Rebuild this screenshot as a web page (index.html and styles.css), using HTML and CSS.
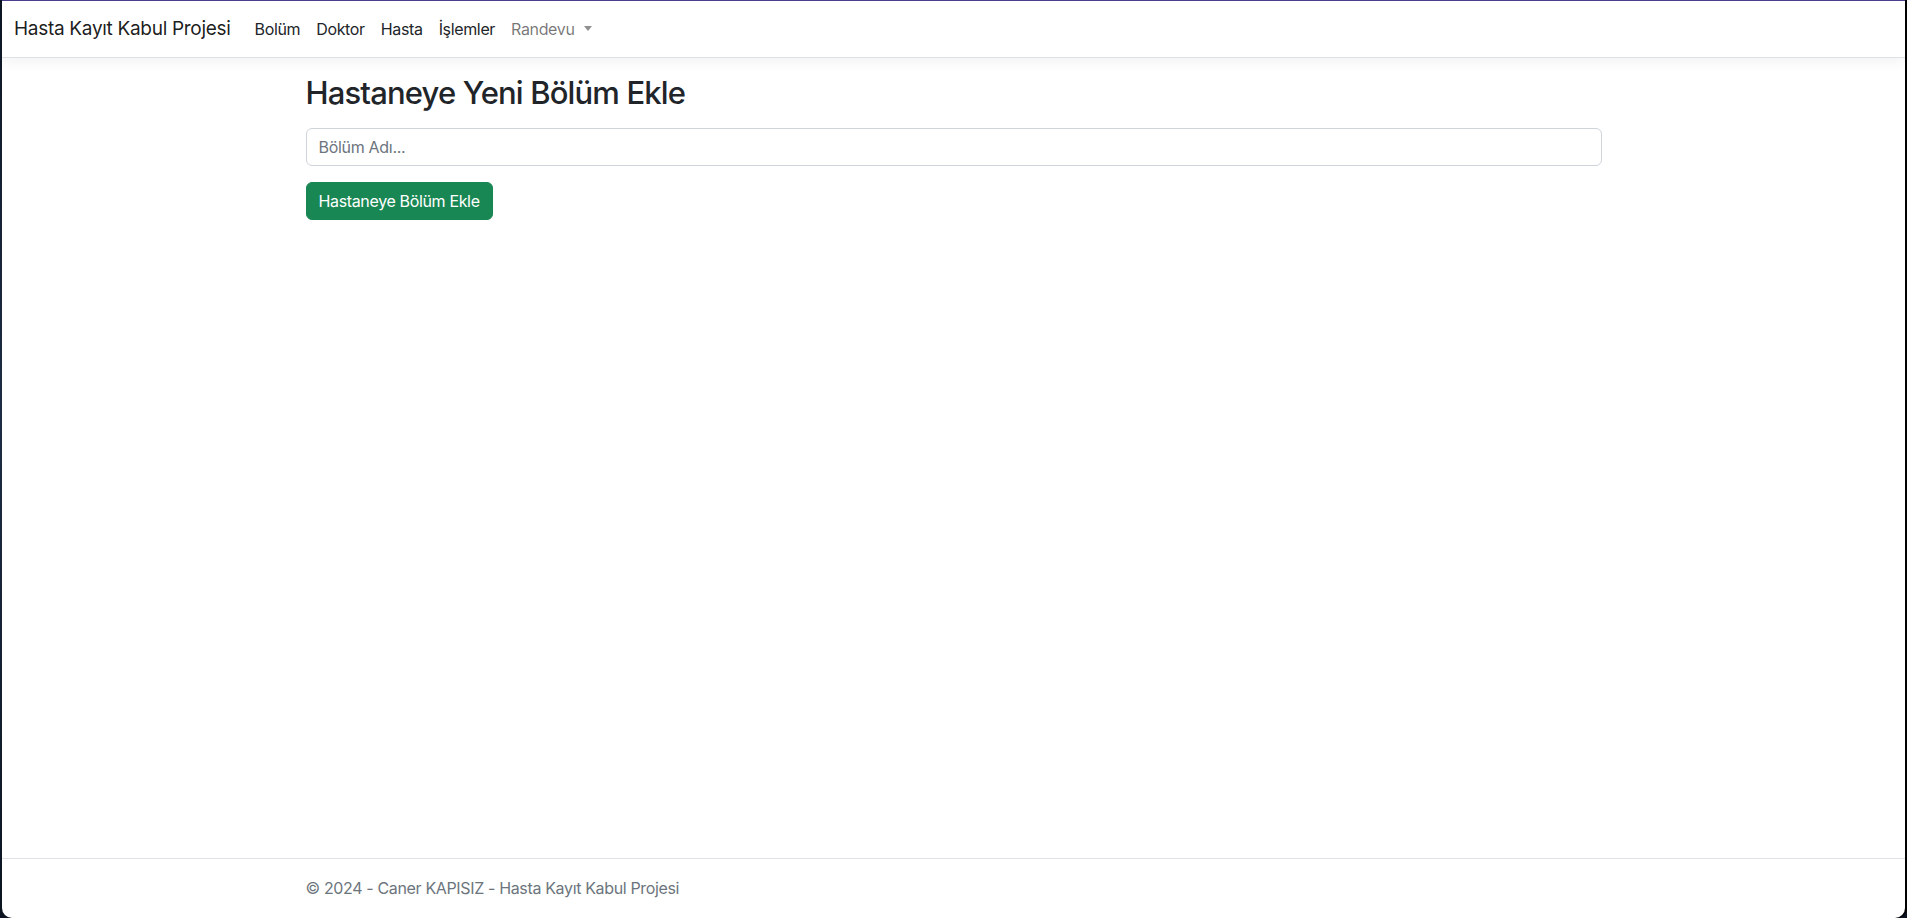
FILE: index.html
```html
<!DOCTYPE html>
<html lang="tr">
<head>
<meta charset="utf-8">
<title>Hasta Kayıt Kabul Projesi</title>
<link rel="stylesheet" href="styles.css">
</head>
<body>
<div class="window">
  <header class="navbar">
    <div class="navbar-inner">
      <a class="brand" href="#">Hasta Kayıt Kabul Projesi</a>
      <ul class="nav">
        <li><a class="nav-link dark" href="#">Bolüm</a></li>
        <li><a class="nav-link dark" href="#">Doktor</a></li>
        <li><a class="nav-link dark" href="#">Hasta</a></li>
        <li><a class="nav-link dark" href="#">İşlemler</a></li>
        <li><a class="nav-link muted dropdown-toggle" href="#">Randevu</a></li>
      </ul>
    </div>
  </header>
  <main class="container">
    <h2 class="title">Hastaneye Yeni Bölüm Ekle</h2>
    <form class="form">
      <input class="form-control" type="text" placeholder="Bölüm Adı...">
      <button class="btn-success" type="button">Hastaneye Bölüm Ekle</button>
    </form>
  </main>
  <footer class="footer">
    <div class="container footer-inner">© 2024 - Caner KAPISIZ - Hasta Kayıt Kabul Projesi</div>
  </footer>
</div>
</body>
</html>
```

FILE: styles.css
```css
* { box-sizing: border-box; }
html, body {
  margin: 0;
  padding: 0;
  height: 918px;
  overflow: hidden;
  background: #000;
}
body {
  font-family: Inter, "Liberation Sans", sans-serif;
  font-size: 16px;
  line-height: 1.5;
  color: #212529;
  background: linear-gradient(180deg, #0d1624 0%, #1d2c45 45%, #0b1420 100%);
}
.window {
  margin: 0 2px 0 2px;
  height: 918px;
  background: #fff;
  border-top: 1px solid #4b3f8f;
  border-radius: 0 0 10px 10px;
  display: flex;
  flex-direction: column;
  box-shadow: 2px 0 0 #000;
}
.navbar {
  background: #fff;
  border-bottom: 1px solid #dee2e6;
  box-shadow: 0 4px 12px rgba(0, 0, 0, 0.05);
  padding: 8px 0;
  margin-bottom: 16px;
  position: relative;
  z-index: 1;
}
.navbar-inner {
  display: flex;
  align-items: center;
  padding: 0 12px;
}
.brand {
  font-size: 19px;
  line-height: 30px;
  padding: 5px 0;
  margin-right: 16px;
  color: rgba(0, 0, 0, 0.9);
  text-decoration: none;
  letter-spacing: -0.3px;
}
.nav {
  display: flex;
  list-style: none;
  margin: 0;
  padding: 0;
}
.nav-link {
  display: block;
  padding: 8px;
  text-decoration: none;
  font-size: 16px;
  line-height: 24px;
  letter-spacing: -0.35px;
}
.nav-link.dark { color: #212529; }
.nav-link.muted { color: rgba(0, 0, 0, 0.55); }
.dropdown-toggle::after {
  content: "";
  display: inline-block;
  margin-left: 9px;
  vertical-align: 4px;
  border-top: 5px solid;
  border-left: 4.5px solid transparent;
  border-right: 4.5px solid transparent;
  opacity: 0.8;
}
.container {
  width: 1320px;
  margin: 0 auto;
  padding: 0 12px;
}
main.container {
  flex: 1;
  padding-bottom: 16px;
}
.title {
  margin: 0 0 16px 0;
  font-size: 31px;
  font-weight: 500;
  line-height: 38.4px;
  color: #212529;
  letter-spacing: -0.85px;
}
.form {
  display: flex;
  flex-direction: column;
  align-items: flex-start;
}
.form-control {
  display: block;
  width: 100%;
  height: 38px;
  padding: 6px 12px;
  font-family: inherit;
  font-size: 16px;
  line-height: 24px;
  color: #212529;
  background: #fff;
  border: 1px solid #ced4da;
  border-radius: 6px;
  margin-bottom: 16px;
  letter-spacing: -0.3px;
}
.form-control::placeholder { color: #6c757d; opacity: 1; }
.btn-success {
  font-family: inherit;
  font-size: 16px;
  line-height: 24px;
  padding: 6px 12px;
  color: #fff;
  background: #198754;
  border: 1px solid #198754;
  border-radius: 6px;
  letter-spacing: -0.35px;
}
.footer {
  border-top: 1px solid #dee2e6;
  line-height: 59px;
  color: #6c757d;
  white-space: nowrap;
}
.footer-inner {
  letter-spacing: -0.35px;
}
```
